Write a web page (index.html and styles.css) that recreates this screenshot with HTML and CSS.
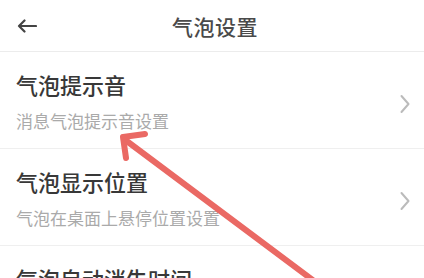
FILE: index.html
```html
<!DOCTYPE html>
<html lang="zh">
<head>
<meta charset="utf-8">
<link rel="stylesheet" href="styles.css">
</head>
<body>
<div class="page">
  <header class="topbar">
    <svg class="back" width="20" height="14" viewBox="0 0 20 14"><path d="M19 7H2M7.5 1.5L2 7l5.5 5.5" fill="none" stroke="#444" stroke-width="2.2" stroke-linecap="round" stroke-linejoin="round"/></svg>
    <div class="title">气泡设置</div>
  </header>
  <div class="list">
    <div class="row">
      <div class="text">
        <div class="name">气泡提示音</div>
        <div class="desc">消息气泡提示音设置</div>
      </div>
      <svg class="chev" width="10" height="20" viewBox="0 0 10 20"><path d="M1.5 2L8.5 10L1.5 18" fill="none" stroke="#bbb" stroke-width="2" stroke-linecap="round" stroke-linejoin="round"/></svg>
    </div>
    <div class="row">
      <div class="text">
        <div class="name">气泡显示位置</div>
        <div class="desc">气泡在桌面上悬停位置设置</div>
      </div>
      <svg class="chev" width="10" height="20" viewBox="0 0 10 20"><path d="M1.5 2L8.5 10L1.5 18" fill="none" stroke="#bbb" stroke-width="2" stroke-linecap="round" stroke-linejoin="round"/></svg>
    </div>
    <div class="row">
      <div class="text">
        <div class="name">气泡自动消失时间</div>
        <div class="desc">气泡自动消失时间设置</div>
      </div>
      <svg class="chev" width="10" height="20" viewBox="0 0 10 20"><path d="M1.5 2L8.5 10L1.5 18" fill="none" stroke="#bbb" stroke-width="2" stroke-linecap="round" stroke-linejoin="round"/></svg>
    </div>
  </div>
  <svg class="annot" width="424" height="278" viewBox="0 0 424 278">
    <path d="M124 139L318 284" stroke="#ea6964" stroke-width="6" stroke-linecap="round" fill="none"/>
    <path d="M145 134L123 137L126 158" stroke="#ea6964" stroke-width="6" stroke-linecap="round" stroke-linejoin="round" fill="none"/>
  </svg>
</div>
</body>
</html>
```

FILE: styles.css
```css
html, body {
  margin: 0;
  padding: 0;
  background: #fff;
}
body {
  font-family: "Noto Sans CJK SC", "Noto Sans", sans-serif;
  overflow: hidden;
}
.page {
  position: relative;
  width: 424px;
  height: 278px;
  overflow: hidden;
}
.topbar {
  height: 52px;
  border-bottom: 1px solid #ececec;
  display: flex;
  align-items: center;
  position: relative;
  box-sizing: border-box;
}
.back {
  margin-left: 17px;
  margin-top: 1px;
}
.title {
  position: absolute;
  left: 0;
  right: 0;
  text-align: center;
  font-size: 21px;
  font-weight: 500;
  color: #4a4a4a;
  letter-spacing: 0.5px;
  padding-left: 6px;
  line-height: 52px;
}
.row {
  display: flex;
  align-items: center;
  justify-content: space-between;
  padding: 18px 14px 15px 16px;
  border-bottom: 1px solid #efefef;
  height: 63px;
}
.text {
  display: flex;
  flex-direction: column;
  gap: 11px;
}
.name {
  font-size: 22px;
  font-weight: 500;
  line-height: 28px;
  color: #383838;
}
.desc {
  font-size: 17px;
  line-height: 24px;
  color: #aaa;
}
.chev {
  margin-top: 4px;
}
.annot {
  position: absolute;
  left: 0;
  top: 0;
  pointer-events: none;
}
```
